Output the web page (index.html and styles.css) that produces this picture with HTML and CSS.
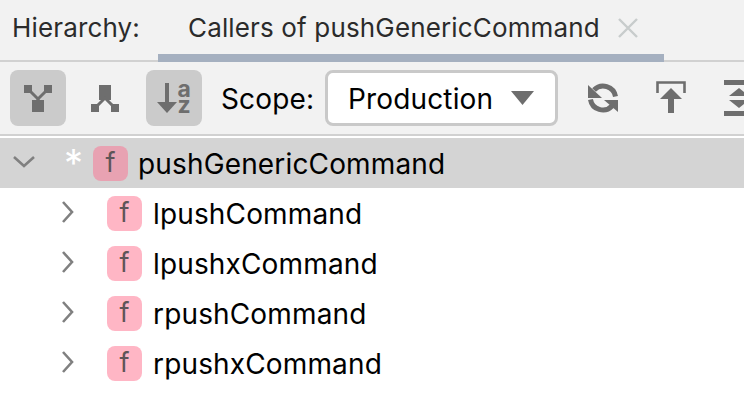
FILE: index.html
```html
<!DOCTYPE html>
<html lang="en">
<head>
<meta charset="utf-8">
<title>Hierarchy</title>
<link rel="stylesheet" href="styles.css">
</head>
<body>
<header class="tabbar">
  <span class="tabbar-label">Hierarchy:</span>
  <div class="tab">
    <span>Callers of pushGenericCommand</span>
    <svg class="tab-close" width="20" height="20" viewBox="0 0 20 20"><path d="M1 1 L19 19 M19 1 L1 19" stroke="#c8cccc" stroke-width="2.4" fill="none"/></svg>
  </div>
</header>
<div class="toolbar">
  <button class="tool tool-first tool-on">
    <svg width="28" height="27" viewBox="0 0 28 27" fill="#6e6e6e"><rect x="0" y="0" width="8" height="8"/><rect x="20" y="0" width="8" height="8"/><rect x="8" y="15" width="12" height="12"/><path d="M6 6 L14 14 L22 6" fill="none" stroke="#6e6e6e" stroke-width="3"/><rect x="12.500" y="12" width="3" height="4"/></svg>
  </button>
  <button class="tool tool-second">
    <svg width="28" height="27" viewBox="0 0 28 27" fill="#6e6e6e"><rect x="8" y="0" width="12" height="15"/><rect x="0" y="19" width="8" height="8"/><rect x="20" y="19" width="8" height="8"/><path d="M5 22 L14 13 L23 22" fill="none" stroke="#6e6e6e" stroke-width="3"/></svg>
  </button>
  <button class="tool tool-on">
    <svg class="sort-icon" width="34" height="32" viewBox="0 0 34 32" fill="#6e6e6e"><rect x="8" y="1" width="4" height="22"/><path d="M0 20 H20 L10 31 Z"/><text class="sort-letter" x="20.500" y="15">a</text><text class="sort-letter" x="20.500" y="31">z</text></svg>
  </button>
  <span class="scope-label">Scope:</span>
  <div class="combo">
    <span class="combo-text">Production</span>
    <svg class="combo-arrow" width="23" height="14" viewBox="0 0 23 14"><path d="M0 0 H23 L11.500 14 Z" fill="#6e6e6e"/></svg>
  </div>
  <div class="tool-group">
    <svg width="30" height="30" viewBox="0 0 30 30" fill="none"><path d="M6 7 A12.500 12.500 0 0 1 27.500 13.500" stroke="#6e6e6e" stroke-width="5"/><path d="M0 2 V15 H14 Z" fill="#6e6e6e"/><path d="M2.500 16.500 A12.500 12.500 0 0 0 24 23" stroke="#6e6e6e" stroke-width="5"/><path d="M30 29 V17 H16 Z" fill="#6e6e6e"/></svg>
    <svg width="30" height="34" viewBox="0 0 30 34" fill="none"><path d="M1.500 12 V1.500 H28.500 V12" stroke="#6e6e6e" stroke-width="2.600"/><path d="M15 7 L26 18 H4 Z" fill="#6e6e6e"/><rect x="12" y="17" width="6" height="15" fill="#6e6e6e"/></svg>
    <svg width="30" height="36" viewBox="0 0 30 36" fill="#6e6e6e"><rect x="0" y="0" width="30" height="5"/><rect x="0" y="31" width="30" height="5"/><path d="M15 8 L25 16 H5 Z"/><path d="M15 28 L25 20 H5 Z"/></svg>
  </div>
</div>
<ul class="tree">
  <li class="row row-root">
    <svg class="chev-down" width="22" height="12" viewBox="0 0 22 12"><path d="M1 1 L11 10 L21 1" fill="none" stroke="#808080" stroke-width="2.600"/></svg>
    <span class="star">*</span>
    <span class="fn-badge fn-badge-root">f</span>
    <span class="row-text">pushGenericCommand</span>
  </li>
  <li class="row row-child">
    <svg class="chev" width="12" height="22" viewBox="0 0 12 22"><path d="M1 1 L10 11 L1 21" fill="none" stroke="#808080" stroke-width="2.600"/></svg>
    <span class="fn-badge">f</span>
    <span class="row-text">lpushCommand</span>
  </li>
  <li class="row row-child">
    <svg class="chev" width="12" height="22" viewBox="0 0 12 22"><path d="M1 1 L10 11 L1 21" fill="none" stroke="#808080" stroke-width="2.600"/></svg>
    <span class="fn-badge">f</span>
    <span class="row-text">lpushxCommand</span>
  </li>
  <li class="row row-child">
    <svg class="chev" width="12" height="22" viewBox="0 0 12 22"><path d="M1 1 L10 11 L1 21" fill="none" stroke="#808080" stroke-width="2.600"/></svg>
    <span class="fn-badge">f</span>
    <span class="row-text">rpushCommand</span>
  </li>
  <li class="row row-child">
    <svg class="chev" width="12" height="22" viewBox="0 0 12 22"><path d="M1 1 L10 11 L1 21" fill="none" stroke="#808080" stroke-width="2.600"/></svg>
    <span class="fn-badge">f</span>
    <span class="row-text">rpushxCommand</span>
  </li>
</ul>
</body>
</html>
```
FILE: styles.css
```css
* { box-sizing: border-box; }
html, body { margin: 0; padding: 0; }
body {
  width: 744px;
  height: 400px;
  overflow: hidden;
  background: #fff;
  color: #000;
  font-family: Inter, "Liberation Sans", sans-serif;
  font-size: 28px;
  letter-spacing: 0.15px;
}
.tabbar {
  height: 62px;
  background: #f2f2f2;
  border-bottom: 2px solid #d1d1d1;
  display: flex;
  padding-left: 12px;
}
.tabbar-label {
  width: 146px;
  line-height: 56px;
  font-size: 26px;
  color: #2b2b2b;
}
.tab {
  width: 506px;
  height: 62px;
  padding: 2px 0 0 30px;
  border-bottom: 8px solid #a5b0c0;
  display: flex;
  align-items: center;
  gap: 18px;
  font-size: 26px;
  color: #2b2b2b;
  line-height: 52px;
}
.tab-close { flex: none; }
.toolbar {
  height: 74px;
  background: #f2f2f2;
  border-bottom: 2px solid #d1d1d1;
  display: flex;
  align-items: center;
  padding: 0 0 0 10px;
  overflow: hidden;
}
.tool {
  flex: none;
  width: 56px;
  height: 56px;
  margin-right: 12px;
  padding: 0;
  border: 0;
  border-radius: 8px;
  background: transparent;
  display: flex;
  align-items: center;
  justify-content: center;
}
.tool-first { margin-right: 11px; }
.tool-second { margin-right: 13px; }
.tool-on { background: #cbcbcb; }
.sort-icon { overflow: visible; }
.sort-letter {
  font-family: Inter, "Liberation Sans", sans-serif;
  font-size: 23px;
  font-weight: 700;
}
.scope-label {
  margin-left: 7px;
  width: 104px;
  flex: none;
  padding-top: 2px;
}
.combo {
  flex: none;
  width: 233px;
  height: 56px;
  background: #fff;
  border: 3px solid #c9c9c9;
  border-radius: 8px;
  padding: 0 21px 0 20px;
  display: flex;
  align-items: center;
  justify-content: space-between;
}
.combo-text { padding-top: 2px; }
.tool-group {
  flex: none;
  display: flex;
  align-items: center;
  gap: 38px;
  margin-left: 30px;
}
.tree {
  list-style: none;
  margin: 2px 0 0;
  padding: 0;
}
.row {
  height: 50px;
  display: flex;
  align-items: center;
}
.row-root {
  background: #d4d4d4;
  padding-left: 13px;
}
.row-child { padding-left: 62px; }
.chev-down { flex: none; margin-right: 29px; margin-bottom: 2px; }
.chev { flex: none; margin-right: 33px; margin-bottom: 3px; }
.star {
  width: 29px;
  flex: none;
  color: #fff;
  font-size: 38px;
  line-height: 38px;
  height: 38px;
}
.fn-badge {
  flex: none;
  width: 35px;
  height: 35px;
  border-radius: 8px;
  background: #ffb6c5;
  color: #5f5558;
  font-size: 27px;
  line-height: 34px;
  text-align: center;
  margin-right: 11px;
}
.fn-badge-root { background: #e8a2b2; margin-right: 10px; }
.row-text { white-space: nowrap; padding-top: 2px; }
```
